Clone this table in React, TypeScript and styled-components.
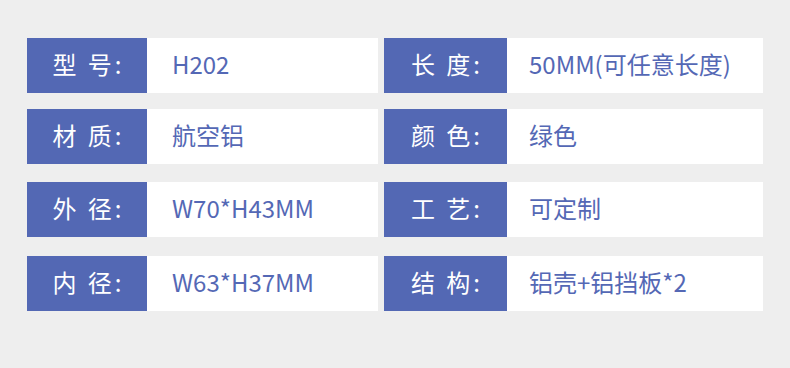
import styled, { createGlobalStyle } from "styled-components";

const GlobalStyle = createGlobalStyle`
  html, body {
    margin: 0;
    padding: 0;
    background: #eeeeee;
  }
  body {
    font-family: "Noto Sans CJK SC", "Noto Sans", sans-serif;
  }
`;

type RowProps = {
  $top: number;
};

type CellProps = {
  $labelWidth: number;
  $width: number;
};

type ValueProps = {
  $indent: number;
};

const Page = styled.div`
  width: 790px;
  height: 368px;
  padding: 0 0 0 27px;
  box-sizing: border-box;
  background: #eeeeee;
  overflow: hidden;
`;

const Row = styled.div<RowProps>`
  display: flex;
  gap: 6px;
  margin-top: ${(p) => p.$top}px;
`;

const Cell = styled.div<CellProps>`
  display: grid;
  grid-template-columns: ${(p) => p.$labelWidth}px 1fr;
  width: ${(p) => p.$width}px;
  height: 55px;
`;

const Label = styled.div`
  background: #5368b4;
  color: #ffffff;
  font-size: 24px;
  letter-spacing: 3px;
  padding: 0 0 4px 3px;
  display: flex;
  align-items: center;
  justify-content: center;
  white-space: pre;
`;

const Value = styled.div<ValueProps>`
  background: #ffffff;
  color: #5468b5;
  font-size: 24px;
  display: flex;
  align-items: center;
  padding: 0 0 5px ${(p) => p.$indent}px;
  white-space: nowrap;
`;

const rows = [
  { top: 38, left: ["型 号:", "H202"], right: ["长 度:", "50MM(可任意长度)"] },
  { top: 16, left: ["材 质:", "航空铝"], right: ["颜 色:", "绿色"] },
  { top: 18, left: ["外 径:", "W70*H43MM"], right: ["工 艺:", "可定制"] },
  { top: 19, left: ["内 径:", "W63*H37MM"], right: ["结 构:", "铝壳+铝挡板*2"] },
];

export default function App() {
  return (
    <Page>
      <GlobalStyle />
      {rows.map((row) => (
        <Row key={row.left[0]} $top={row.top}>
          <Cell $labelWidth={120} $width={351}>
            <Label>{row.left[0]}</Label>
            <Value $indent={25}>{row.left[1]}</Value>
          </Cell>
          <Cell $labelWidth={123} $width={379}>
            <Label>{row.right[0]}</Label>
            <Value $indent={22}>{row.right[1]}</Value>
          </Cell>
        </Row>
      ))}
    </Page>
  );
}
